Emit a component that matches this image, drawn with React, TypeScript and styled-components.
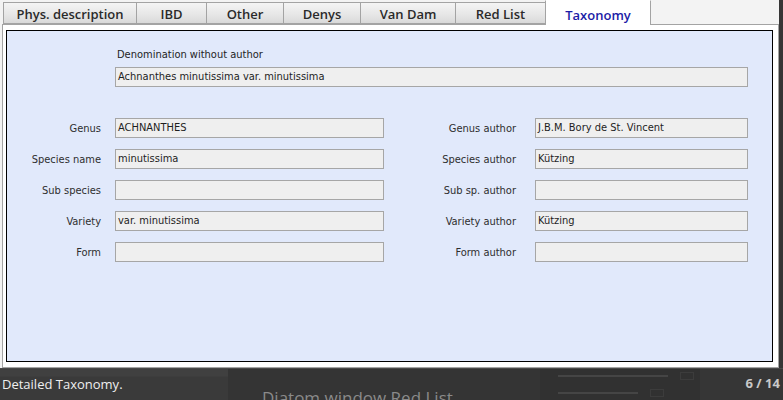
import React from "react";
import styled, { createGlobalStyle } from "styled-components";

const Global = createGlobalStyle`
  html, body { margin: 0; padding: 0; background: #363636; overflow: hidden; }
  #root { width: 783px; height: 400px; }
`;

const Page = styled.div`
  display: flex;
  flex-direction: column;
  width: 783px;
  height: 400px;
`;

const Window = styled.div`
  width: 779px;
  height: 368px;
  background: #f3f3f3;
  display: flex;
  flex-direction: column;
`;

const TabStrip = styled.div`
  display: flex;
  align-items: flex-end;
  height: 24px;
  padding-left: 4px;
`;

const Tab = styled.div<{ $w: number; $active?: boolean }>`
  box-sizing: border-box;
  width: ${(p) => p.$w}px;
  height: ${(p) => (p.$active ? 25 : 22)}px;
  margin-bottom: ${(p) => (p.$active ? -1 : 0)}px;
  position: relative;
  z-index: ${(p) => (p.$active ? 2 : 1)};
  display: flex;
  align-items: center;
  justify-content: center;
  padding-top: ${(p) => (p.$active ? 4 : 1)}px;
  border: 1px solid #a3a3a3;
  border-bottom: ${(p) => (p.$active ? "none" : "1px solid #a3a3a3")};
  border-top-color: ${(p) => (p.$active ? "#ffffff" : "#a3a3a3")};
  margin-left: -1px;
  background: ${(p) =>
    p.$active ? "#ffffff" : "linear-gradient(#f4f4f4, #e6e6e6 60%, #d9d9d9)"};
  color: ${(p) => (p.$active ? "#1c1ca6" : "#2a2a2a")};
  font-family: "Open Sans", "Liberation Sans", sans-serif;
  font-weight: 600;
  font-size: 13px;
  white-space: nowrap;
`;

const Panel = styled.div`
  flex: 1;
  margin-left: 2px;
  border: 1px solid #a3a3a3;
  background: #ffffff;
  padding: 5px 5px 5px 3px;
  display: flex;
`;

const Inner = styled.div`
  flex: 1;
  border: 1px solid #000000;
  background: #e1e9fb;
  padding-top: 17px;
  font-family: "DejaVu Sans Condensed", "DejaVu Sans", sans-serif;
  font-size: 11px;
  color: #2e2e2e;
`;

const DenomBlock = styled.div`
  margin-left: 108px;
  width: 633px;
  display: flex;
  flex-direction: column;
`;

const DenomLabel = styled.div`
  height: 14px;
  line-height: 14px;
  padding-left: 2px;
  margin-bottom: 5px;
  color: #1e1e1e;
`;

const Field = styled.div`
  box-sizing: border-box;
  height: 20px;
  border: 1px solid #a6a6a6;
  background: #efefef;
  padding: 0 2px;
  line-height: 18px;
  white-space: nowrap;
  overflow: hidden;
  color: #1e1e1e;
`;

const FieldGrid = styled.div`
  margin-top: 31px;
  display: grid;
  grid-template-columns: 108px 269px 151px 213px;
  grid-auto-rows: 20px;
  row-gap: 11px;
`;

const Label = styled.div<{ $gap: number }>`
  display: flex;
  align-items: center;
  justify-content: flex-end;
  padding-right: ${(p) => p.$gap}px;
  white-space: nowrap;
`;

const BottomBar = styled.div`
  flex: 1;
  display: flex;
  overflow: hidden;
  border-top: 1px solid #4a4a4a;
`;

const CaptionZone = styled.div`
  width: 228px;
  background: linear-gradient(#404040 0, #404040 7px, #3a3a3a 8px);
  padding: 6px 0 0 2px;
  box-sizing: border-box;
  font-family: "Open Sans", "Liberation Sans", sans-serif;
  font-size: 13px;
  color: #efefef;
`;

const TitleZone = styled.div`
  width: 312px;
  background: #343434;
  padding: 17px 0 0 34px;
  box-sizing: border-box;
  font-family: "Open Sans", "Liberation Sans", sans-serif;
  font-size: 17px;
  color: #8a8a8a;
  white-space: nowrap;
  overflow: hidden;
`;

const ThumbZone = styled.div`
  width: 160px;
  background: #313131;
  display: flex;
  flex-direction: column;
  gap: 9px;
  padding: 3px 0 0 18px;
  box-sizing: border-box;
`;

const ThumbRow = styled.div`
  display: flex;
  gap: 12px;
  align-items: center;
`;

const ThumbLine = styled.div<{ $w: number }>`
  width: ${(p) => p.$w}px;
  height: 2px;
  background: #454545;
`;

const ThumbCell = styled.div`
  width: 14px;
  height: 8px;
  border: 1px solid #3c3c3c;
  box-sizing: border-box;
`;

const CounterZone = styled.div`
  flex: 1;
  background: #363636;
  display: flex;
  justify-content: flex-end;
  padding: 5px 3px 0 0;
  box-sizing: border-box;
  font-family: "Open Sans", "Liberation Sans", sans-serif;
  font-weight: 700;
  font-size: 13px;
  color: #c9c9c9;
`;

const tabs = [
  { label: "Phys. description", w: 134 },
  { label: "IBD", w: 71 },
  { label: "Other", w: 78 },
  { label: "Denys", w: 78 },
  { label: "Van Dam", w: 96 },
  { label: "Red List", w: 91 },
  { label: "Taxonomy", w: 106, active: true },
];

const rows = [
  ["Genus", "ACHNANTHES", "Genus author", "J.B.M. Bory de St. Vincent"],
  ["Species name", "minutissima", "Species author", "Kützing"],
  ["Sub species", "", "Sub sp. author", ""],
  ["Variety", "var. minutissima", "Variety author", "Kützing"],
  ["Form", "", "Form author", ""],
];

export default function App() {
  return (
    <Page>
      <Global />
      <Window>
        <TabStrip>
          {tabs.map((t) => (
            <Tab key={t.label} $w={t.w} $active={t.active}>
              {t.label}
            </Tab>
          ))}
        </TabStrip>
        <Panel>
          <Inner>
            <DenomBlock>
              <DenomLabel>Denomination without author</DenomLabel>
              <Field>Achnanthes minutissima var. minutissima</Field>
            </DenomBlock>
            <FieldGrid>
              {rows.map((r) => (
                <React.Fragment key={r[0]}>
                  <Label $gap={14}>{r[0]}</Label>
                  <Field>{r[1]}</Field>
                  <Label $gap={19}>{r[2]}</Label>
                  <Field>{r[3]}</Field>
                </React.Fragment>
              ))}
            </FieldGrid>
          </Inner>
        </Panel>
      </Window>
      <BottomBar>
        <CaptionZone>Detailed Taxonomy.</CaptionZone>
        <TitleZone>Diatom window Red List</TitleZone>
        <ThumbZone>
          <ThumbRow>
            <ThumbLine $w={110} />
            <ThumbCell />
          </ThumbRow>
          <ThumbRow>
            <ThumbLine $w={80} />
            <ThumbCell />
          </ThumbRow>
          <ThumbRow>
            <ThumbLine $w={100} />
            <ThumbCell />
          </ThumbRow>
        </ThumbZone>
        <CounterZone>6 / 14</CounterZone>
      </BottomBar>
    </Page>
  );
}
